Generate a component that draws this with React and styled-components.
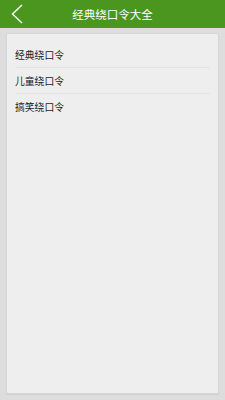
import React from "react";
import styled, { createGlobalStyle } from "styled-components";

const GlobalStyle = createGlobalStyle`
  html, body {
    margin: 0;
    padding: 0;
    background: #dddddd;
    font-family: "Noto Sans CJK SC", "Noto Sans", sans-serif;
  }
`;

const Page = styled.div`
  width: 225px;
  height: 400px;
  display: flex;
  flex-direction: column;
  background: #dddddd;
  box-sizing: border-box;
`;

const Header = styled.div`
  height: 28px;
  background: #4b961f;
  display: flex;
  align-items: center;
  justify-content: center;
  position: relative;
  flex-shrink: 0;
`;

const BackButton = styled.div`
  position: absolute;
  left: 9px;
  top: 3px;
  width: 16px;
  height: 22px;
  display: flex;
  align-items: center;
  justify-content: center;
`;

const Title = styled.div`
  color: #ffffff;
  font-size: 11.5px;
  line-height: 28px;
`;

const Body = styled.div`
  flex: 1;
  padding: 5px 6px 6px 6px;
  display: flex;
`;

const Card = styled.div`
  flex: 1;
  background: #eeeeee;
  border: 1px solid #d6d6d6;
  border-radius: 2px;
  box-shadow: 0 1px 1px rgba(0, 0, 0, 0.06);
  padding: 8px 8px 0 8px;
  box-sizing: border-box;
`;

const Row = styled.div`
  height: 25px;
  display: flex;
  align-items: center;
  padding-left: 0;
  font-size: 9.8px;
  color: #222222;
  border-bottom: 1px solid ${(p) => (p.$last ? "transparent" : "#e4e4e4")};
  margin-right: 0;
`;

const items = ["经典绕口令", "儿童绕口令", "搞笑绕口令"];

export default function App() {
  return (
    <Page>
      <GlobalStyle />
      <Header>
        <BackButton>
          <svg width="12" height="20" viewBox="0 0 12 20">
            <polyline
              points="11,1 1.5,10 11,19"
              fill="none"
              stroke="#ffffff"
              strokeWidth="1.4"
            />
          </svg>
        </BackButton>
        <Title>经典绕口令大全</Title>
      </Header>
      <Body>
        <Card>
          {items.map((t, i) => (
            <Row key={t} $last={i === items.length - 1}>
              {t}
            </Row>
          ))}
        </Card>
      </Body>
    </Page>
  );
}
